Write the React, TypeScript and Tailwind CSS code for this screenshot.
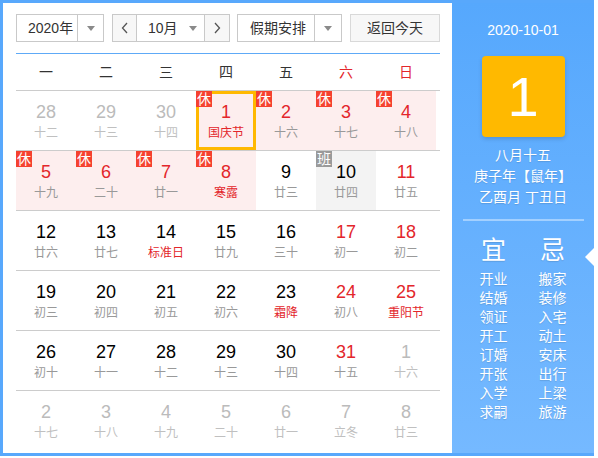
import React from 'react';

type Cell = {
  d: number;
  l: string;
  other?: boolean;
  red?: boolean;
  lred?: boolean;
  tag?: '休' | '班';
  bg?: 'pink' | 'gray';
  sel?: boolean;
};

const weeks: Cell[][] = [
  [
    { d: 28, l: '十二', other: true },
    { d: 29, l: '十三', other: true },
    { d: 30, l: '十四', other: true },
    { d: 1, l: '国庆节', red: true, lred: true, tag: '休', bg: 'pink', sel: true },
    { d: 2, l: '十六', red: true, tag: '休', bg: 'pink' },
    { d: 3, l: '十七', red: true, tag: '休', bg: 'pink' },
    { d: 4, l: '十八', red: true, tag: '休', bg: 'pink' },
  ],
  [
    { d: 5, l: '十九', red: true, tag: '休', bg: 'pink' },
    { d: 6, l: '二十', red: true, tag: '休', bg: 'pink' },
    { d: 7, l: '廿一', red: true, tag: '休', bg: 'pink' },
    { d: 8, l: '寒露', red: true, lred: true, tag: '休', bg: 'pink' },
    { d: 9, l: '廿三' },
    { d: 10, l: '廿四', tag: '班', bg: 'gray' },
    { d: 11, l: '廿五', red: true },
  ],
  [
    { d: 12, l: '廿六' },
    { d: 13, l: '廿七' },
    { d: 14, l: '标准日', lred: true },
    { d: 15, l: '廿九' },
    { d: 16, l: '三十' },
    { d: 17, l: '初一', red: true },
    { d: 18, l: '初二', red: true },
  ],
  [
    { d: 19, l: '初三' },
    { d: 20, l: '初四' },
    { d: 21, l: '初五' },
    { d: 22, l: '初六' },
    { d: 23, l: '霜降', lred: true },
    { d: 24, l: '初八', red: true },
    { d: 25, l: '重阳节', red: true, lred: true },
  ],
  [
    { d: 26, l: '初十' },
    { d: 27, l: '十一' },
    { d: 28, l: '十二' },
    { d: 29, l: '十三' },
    { d: 30, l: '十四' },
    { d: 31, l: '十五', red: true },
    { d: 1, l: '十六', other: true },
  ],
  [
    { d: 2, l: '十七', other: true },
    { d: 3, l: '十八', other: true },
    { d: 4, l: '十九', other: true },
    { d: 5, l: '二十', other: true },
    { d: 6, l: '廿一', other: true },
    { d: 7, l: '立冬', other: true },
    { d: 8, l: '廿三', other: true },
  ],
];

const yi = ['开业', '结婚', '领证', '开工', '订婚', '开张', '入学', '求嗣'];
const ji = ['搬家', '装修', '入宅', '动土', '安床', '出行', '上梁', '旅游'];

const Caret = () => (
  <svg width="8" height="5" viewBox="0 0 8 5">
    <path d="M0 0h8L4 5z" fill="#8a8a8a" />
  </svg>
);

const Chevron = ({ dir }: { dir: 'l' | 'r' }) => (
  <svg width="8" height="12" viewBox="0 0 8 12">
    <path
      d={dir === 'l' ? 'M6 1L1.5 6L6 11' : 'M2 1l4.5 5L2 11'}
      fill="none"
      stroke="#555"
      strokeWidth="1.3"
    />
  </svg>
);

function DayCell({ c }: { c: Cell }) {
  const bg = c.bg === 'pink' ? 'bg-[#fdeeee]' : c.bg === 'gray' ? 'bg-[#f3f3f3]' : '';
  const num = c.other ? 'text-[#bbbbbb]' : c.red ? 'text-[#e3262b]' : 'text-black';
  const lunar = c.other ? 'text-[#c0c0c0]' : c.lred ? 'text-[#e3262b]' : 'text-[#999999]';
  return (
    <div className={`relative h-[59px] flex flex-col items-center pt-[11px] ${bg}`}>
      {c.sel && <div className="absolute inset-0 border-[3px] border-[#ffb800]" />}
      {c.tag && (
        <span
          className={`absolute left-0 top-0 w-[16px] h-[16px] flex items-center justify-center text-[14px] leading-none text-white ${
            c.tag === '休' ? 'bg-[#f5412f]' : 'bg-[#9a9a9a]'
          }`}
        >
          {c.tag}
        </span>
      )}
      <span className={`text-[18px] leading-[20px] ${num}`}>{c.d}</span>
      <span className={`mt-[3px] text-[12px] leading-[16px] ${lunar}`}>{c.l}</span>
    </div>
  );
}

export default function App() {
  return (
    <div
      className="w-[598px] h-[458px] bg-white"
      style={{ fontFamily: '"Liberation Sans", "Noto Sans CJK SC", sans-serif' }}
    >
      <div className="w-[594px] h-[456px] flex border-t-[3px] border-l-[3px] border-b-[3px] border-[#58a8fc]">
        {/* left: calendar */}
        <div className="w-[449px] h-full bg-white pl-[13px] pt-[11px]">
          <div className="flex items-center h-[28px] text-[14px] text-[#333]">
            <div className="w-[88px] h-full flex border border-[#c9c9c9]">
              <div className="flex-1 flex items-center pl-[11px]">2020年</div>
              <div className="w-[26px] border-l border-[#c9c9c9] flex items-center justify-center">
                <Caret />
              </div>
            </div>
            <div className="ml-[8px] w-[118px] h-full flex border border-[#c9c9c9]">
              <div className="w-[24px] bg-[#f7f7f7] flex items-center justify-center border-r border-[#c9c9c9]">
                <Chevron dir="l" />
              </div>
              <div className="flex-1 flex items-center pl-[11px] gap-[11px]">
                <span>10月</span>
                <Caret />
              </div>
              <div className="w-[25px] bg-[#f7f7f7] flex items-center justify-center border-l border-[#c9c9c9]">
                <Chevron dir="r" />
              </div>
            </div>
            <div className="ml-[7px] w-[105px] h-full flex border border-[#c9c9c9]">
              <div className="flex-1 flex items-center pl-[12px]">假期安排</div>
              <div className="w-[27px] border-l border-[#c9c9c9] flex items-center justify-center">
                <Caret />
              </div>
            </div>
            <div className="ml-[8px] w-[90px] h-full flex items-center justify-center bg-[#f7f7f7] border border-[#d9d9d9]">
              返回今天
            </div>
          </div>

          <div className="mt-[11px] w-[424px] h-px bg-[#5eaaf7]" />
          <div className="w-[424px] grid grid-cols-[repeat(7,60px)] h-[36px] items-center text-[14px] text-[#333]">
            {['一', '二', '三', '四', '五', '六', '日'].map((w, i) => (
              <div key={w} className={`text-center ${i >= 5 ? 'text-[#e3262b]' : ''}`}>
                {w}
              </div>
            ))}
          </div>
          {weeks.map((row, ri) => (
            <div key={ri} className="w-[424px] border-t border-[#cccccc]">
              <div className="grid grid-cols-[repeat(7,60px)]">
                {row.map((c, ci) => (
                  <DayCell key={ci} c={c} />
                ))}
              </div>
            </div>
          ))}
        </div>

        {/* right: detail panel */}
        <div className="relative w-[142px] h-full bg-linear-to-b from-[#56a8fd] to-[#75b9ff] text-white flex flex-col items-center">
          <div className="mt-[18px] text-[14px] leading-[18px]">2020-10-01</div>
          <div className="mt-[17px] w-[83px] h-[81px] rounded-[4px] bg-[#ffb900] shadow-[0_2px_4px_rgba(0,0,0,0.15)] flex items-center justify-center text-[56px] leading-none">
            1
          </div>
          <div className="mt-[8px] flex flex-col items-center text-[14px] leading-[21px] [text-shadow:0_1px_1px_rgba(0,0,0,0.12)]">
            <span>八月十五</span>
            <span>庚子年【鼠年】</span>
            <span>乙酉月 丁丑日</span>
          </div>
          <div className="mt-[11px] w-[121px] h-[2px] bg-[#a3d0ff]" />
          <div className="mt-[14px] flex gap-[31px] [text-shadow:0_1px_1px_rgba(0,0,0,0.12)]">
            <div className="flex flex-col items-center">
              <span className="text-[25px] leading-[30px]">宜</span>
              <div className="mt-[5px] flex flex-col items-center text-[14px] leading-[19px]">
                {yi.map((t) => (
                  <span key={t}>{t}</span>
                ))}
              </div>
            </div>
            <div className="flex flex-col items-center">
              <span className="text-[25px] leading-[30px]">忌</span>
              <div className="mt-[5px] flex flex-col items-center text-[14px] leading-[19px]">
                {ji.map((t) => (
                  <span key={t}>{t}</span>
                ))}
              </div>
            </div>
          </div>
          <div className="absolute right-0 top-[245px] w-0 h-0 border-y-[9px] border-y-transparent border-r-[9px] border-r-white" />
        </div>
      </div>
    </div>
  );
}
